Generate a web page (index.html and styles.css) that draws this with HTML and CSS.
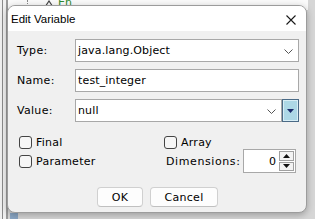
FILE: index.html
```html
<!DOCTYPE html>
<html>
<head>
<meta charset="utf-8">
<link rel="stylesheet" href="styles.css">
</head>
<body>
<div class="desk">
  <div class="ide-left"></div>
  <div class="ide-top">
    <span class="dots"></span>
    <svg class="node-icon" width="10" height="8" viewBox="0 0 10 8"><path d="M1 7 L5 1 L9 7" fill="none" stroke="#444" stroke-width="1.2"/></svg>
    <span class="node-text">En</span>
  </div>
  <div class="ide-bottom"></div>

  <div class="dialog">
    <div class="titlebar">
      <span class="title">Edit Variable</span>
      <svg class="close" width="10" height="10" viewBox="0 0 10 10"><path d="M0.5 0.5 L9.5 9.5 M9.5 0.5 L0.5 9.5" stroke="#1a1a1a" stroke-width="1.1"/></svg>
    </div>
    <div class="content">
      <div class="form">
        <label class="lbl">Type:</label>
        <div class="combo">
          <span class="val">java.lang.Object</span>
          <svg class="chev" width="9" height="5" viewBox="0 0 9 5"><path d="M0.5 0.5 L4.5 4.5 L8.5 0.5" fill="none" stroke="#555" stroke-width="1"/></svg>
        </div>
        <label class="lbl">Name:</label>
        <div class="field"><span class="val">test_integer</span></div>
        <label class="lbl">Value:</label>
        <div class="value-row">
          <div class="combo grow">
            <span class="val">null</span>
            <svg class="chev" width="9" height="5" viewBox="0 0 9 5"><path d="M0.5 0.5 L4.5 4.5 L8.5 0.5" fill="none" stroke="#555" stroke-width="1"/></svg>
          </div>
          <div class="dropbtn">
            <svg width="7" height="4" viewBox="0 0 7 4"><path d="M0 0 H7 L3.5 4 Z" fill="#1b2a6b"/></svg>
          </div>
        </div>
      </div>

      <div class="options">
        <div class="check"><span class="box"></span><span>Final</span></div>
        <div class="check"><span class="box"></span><span>Array</span></div>
        <div class="check"><span class="box"></span><span>Parameter</span></div>
        <div class="dims">
          <span class="dims-lbl">Dimensions:</span>
          <div class="spinner">
            <span class="num">0</span>
            <div class="arrows">
              <div class="arr"><svg width="7" height="4" viewBox="0 0 7 4"><path d="M0 4 H7 L3.5 0 Z" fill="#111"/></svg></div>
              <div class="arr"><svg width="7" height="4" viewBox="0 0 7 4"><path d="M0 0 H7 L3.5 4 Z" fill="#111"/></svg></div>
            </div>
          </div>
        </div>
      </div>

      <div class="buttons">
        <button class="btn ok">OK</button>
        <button class="btn cancel">Cancel</button>
      </div>
    </div>
  </div>
</div>
</body>
</html>
```
FILE: styles.css
```css
html, body {
  margin: 0;
  padding: 0;
}
body {
  width: 315px;
  height: 219px;
  overflow: hidden;
  font-family: "DejaVu Sans", sans-serif;
}
.desk {
  position: relative;
  width: 315px;
  height: 219px;
  background: #d6d6d6;
  overflow: hidden;
}
.ide-left {
  position: absolute;
  left: 0;
  top: 0;
  width: 8px;
  height: 219px;
  background: #f0f0f0;
  border-left: 2px solid #f0f0f0;
  box-sizing: border-box;
  box-shadow: inset 1px 0 0 #8a8a8a, inset -2px 0 0 #9a9a9a;
}
.ide-top {
  position: absolute;
  left: 8px;
  top: 0;
  width: 300px;
  height: 10px;
  background: #fafafa;
}
.dots {
  position: absolute;
  left: 19px;
  top: 0;
  height: 10px;
  border-left: 1px dotted #888;
}
.node-icon {
  position: absolute;
  left: 36px;
  top: 0;
}
.node-text {
  position: absolute;
  left: 50px;
  top: -4px;
  font: 11px "DejaVu Sans", sans-serif;
  color: #2e8b2e;
}
.ide-bottom {
  position: absolute;
  left: 10px;
  top: 213px;
  width: 8px;
  height: 6px;
  background: #8aa6c4;
}
.dialog {
  position: absolute;
  left: 7px;
  top: 5px;
  width: 300px;
  height: 208px;
  box-sizing: border-box;
  border: 1px solid #9c9c9c;
  border-radius: 8px;
  background: #f0f0f0;
  overflow: hidden;
  box-shadow: 0 2px 7px rgba(0, 0, 0, 0.28);
  z-index: 2;
}
.titlebar {
  height: 25px;
  background: #ffffff;
  display: flex;
  align-items: center;
  justify-content: space-between;
  padding: 0 10px 0 3px;
}
.title {
  font: 11.5px "Liberation Sans", sans-serif;
  color: #000;
  margin-top: 1px;
}
.close {
  margin-top: 2px;
}
.content {
  padding: 8px 7px 5px 8px;
}
.form {
  display: grid;
  grid-template-columns: 59px 1fr;
  grid-auto-rows: 23px;
  row-gap: 7px;
}
.lbl {
  font-size: 11px;
  letter-spacing: 0.3px;
  color: #000;
  display: flex;
  align-items: center;
  padding-left: 1px;
}
.combo, .field {
  background: #fff;
  border: 1px solid #a8a8a8;
  box-sizing: border-box;
  display: flex;
  align-items: center;
  justify-content: space-between;
  padding: 0 5px 0 2px;
}
.val {
  font-size: 11px;
  letter-spacing: 0.15px;
  color: #000;
}
.chev {
  margin-top: 1px;
}
.value-row {
  display: flex;
  gap: 0;
}
.grow {
  flex: 1;
}
.dropbtn {
  width: 17px;
  box-sizing: border-box;
  border: 1px solid #4a6a86;
  background: #add8e6;
  box-shadow: inset 0 0 0 1px #d8eef6;
  display: flex;
  align-items: center;
  justify-content: center;
  margin-left: 0;
}
.options {
  display: grid;
  grid-template-columns: 145px 1fr;
  grid-template-rows: 13px 24px;
  margin: 14px 0 0 3px;
}
.check {
  display: flex;
  align-items: center;
  gap: 4px;
  font-size: 11px;
  letter-spacing: 0.25px;
  color: #000;
}
.box {
  width: 13px;
  height: 13px;
  box-sizing: border-box;
  border: 1px solid #444;
  border-radius: 3px;
  background: #f6f6f6;
}
.dims {
  display: flex;
  align-items: center;
}
.dims-lbl {
  width: 79px;
  box-sizing: border-box;
  font-size: 11px;
  letter-spacing: 0.6px;
  padding-left: 2px;
  color: #000;
}
.spinner {
  width: 53px;
  height: 24px;
  box-sizing: border-box;
  border: 1px solid #a8a8a8;
  background: #fff;
  display: flex;
  align-items: center;
  justify-content: flex-end;
  padding: 1px 1px 1px 0;
}
.num {
  font-size: 11px;
  color: #000;
  margin-right: 3px;
}
.arrows {
  width: 15px;
  height: 100%;
  display: flex;
  flex-direction: column;
  gap: 1px;
}
.arr {
  flex: 1;
  border: 1px solid #a0a0a0;
  background: #f3f3f3;
  display: flex;
  align-items: center;
  justify-content: center;
}
.buttons {
  display: flex;
  justify-content: center;
  gap: 7px;
  margin-top: 14px;
}
.btn {
  height: 20px;
  box-sizing: border-box;
  background: #fdfdfd;
  border: 1px solid #d0d0d0;
  border-bottom-color: #c0c0c0;
  border-radius: 4px;
  font: 11px "DejaVu Sans", sans-serif;
  letter-spacing: 0.3px;
  color: #000;
  padding: 0;
}
.ok {
  width: 46px;
}
.cancel {
  width: 68px;
}
```
